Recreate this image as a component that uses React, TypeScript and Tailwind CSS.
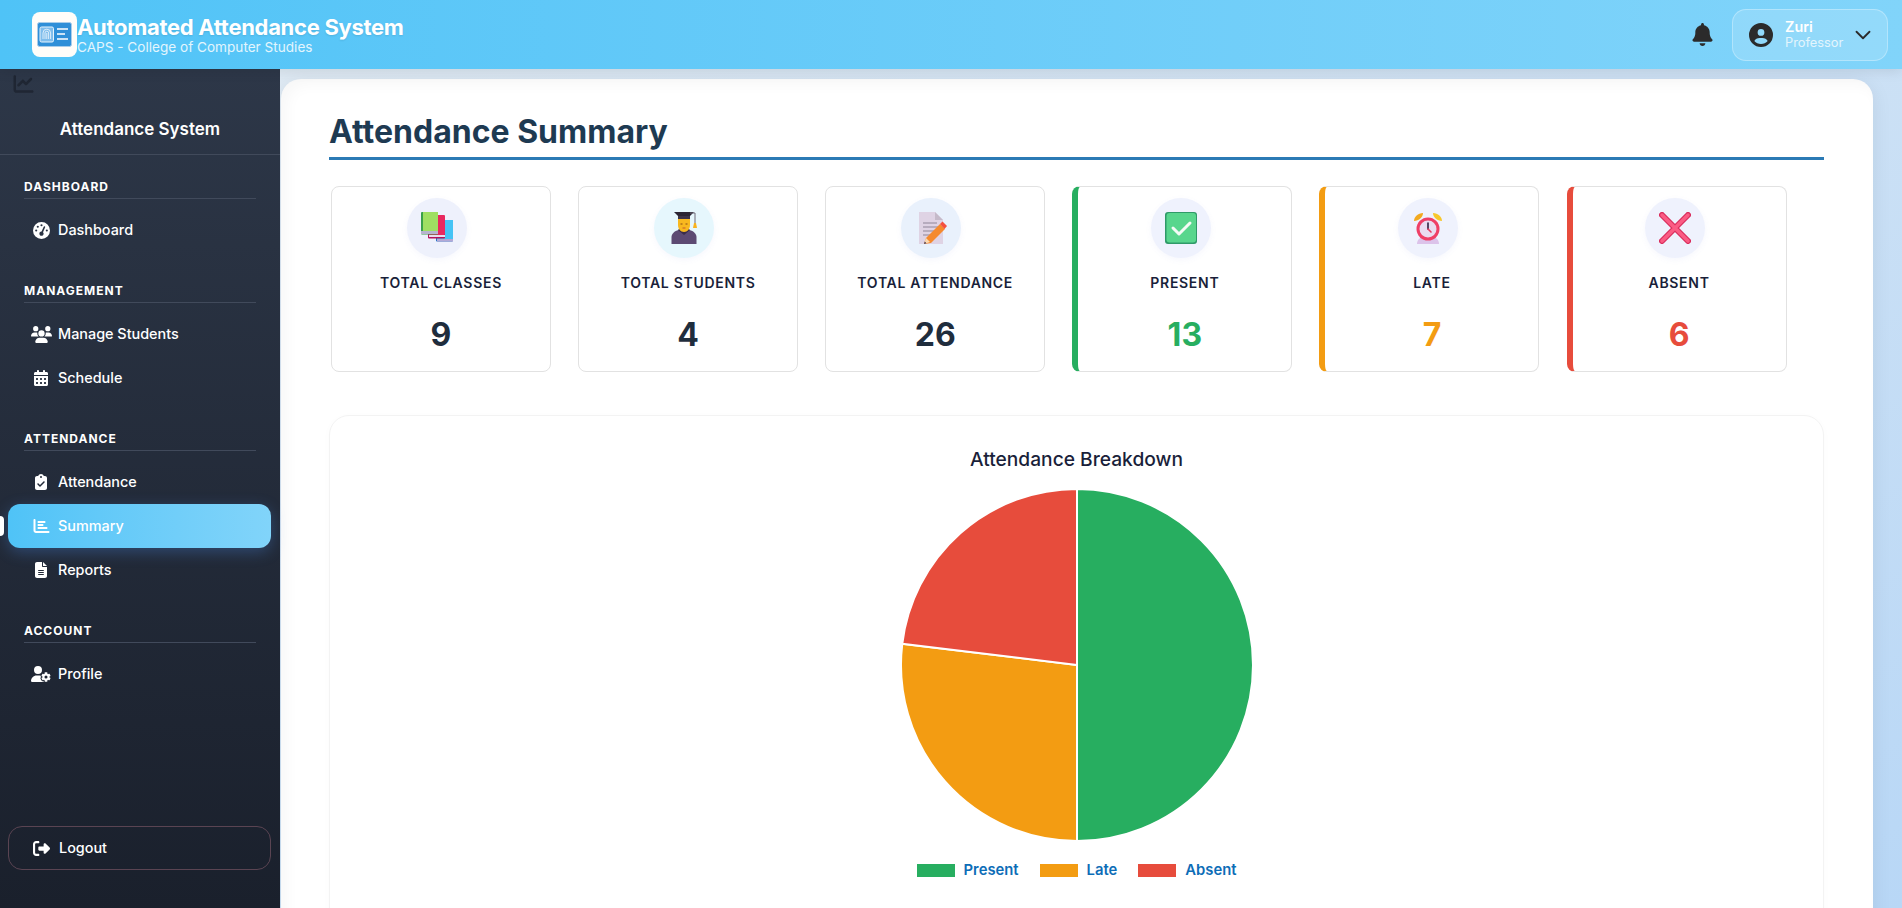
import type { ReactNode } from 'react';
import { ChevronDown } from 'lucide-react';
import {
  FaBell,
  FaCalendarDays,
  FaChartBar,
  FaChartLine,
  FaCircleUser,
  FaClipboardCheck,
  FaFileLines,
  FaGaugeHigh,
  FaRightFromBracket,
  FaUserGear,
  FaUsers,
} from 'react-icons/fa6';

const font = { fontFamily: 'Inter, "Noto Sans", sans-serif' };

// Emoji style pictures for the stat cards
const BooksIcon = () => (
  <svg viewBox="0 0 32 32" className="h-8 w-8">
    <rect x="15" y="9" width="17" height="20.5" rx="1" fill="#1f6fc4" />
    <rect x="16" y="8" width="16" height="19" fill="#45c3f5" />
    <rect x="16" y="27" width="16" height="2.5" fill="#b3a9d6" />
    <rect x="7" y="4" width="17" height="22.5" rx="1" fill="#b3125a" />
    <rect x="8" y="3" width="16" height="20" rx="1" fill="#e8295f" />
    <rect x="8" y="23" width="16" height="2" fill="#e9dcef" />
    <rect x="0" y="0" width="17" height="22.5" rx="1" fill="#3aa04a" />
    <rect x="2" y="0" width="15" height="19" fill="#9fdf62" />
    <rect x="0" y="19" width="17" height="3" fill="#b7b3cf" />
  </svg>
);

const StudentIcon = () => (
  <svg viewBox="0 0 32 32" className="h-8 w-8">
    <path d="M3.500 32v-7c0-3 3-6 7-7h11c4 1 7 4 7 7v7z" fill="#5c4a73" />
    <path d="M10 18l6 5 6-5-2-2h-8z" fill="#3a2d4a" />
    <path d="M10 6h12v7c0 4-2.500 7-6 7s-6-3-6-7z" fill="#f8b81f" />
    <path d="M12.500 12h2M17.500 12h2" stroke="#8a4b16" strokeWidth="1.2" />
    <path d="M14.500 16h3" stroke="#d0682c" strokeWidth="1.2" />
    <path d="M6 0h20l-5 5H11z" fill="#2b2533" />
    <rect x="10" y="4" width="12" height="3" fill="#3c3346" />
    <path d="M22 1h5v10" fill="none" stroke="#6f6a78" strokeWidth="1" />
    <path d="M26 11h2l1 5h-4z" fill="#f9b21e" />
  </svg>
);

const MemoIcon = () => (
  <svg viewBox="0 0 32 32" className="h-8 w-8">
    <path d="M4 0h16l8 8v24H4z" fill="#dfd3e4" />
    <path d="M20 0l8 8h-8z" fill="#c5bac9" />
    <path d="M8 11h14M8 15h16M8 19h12M8 23h7" stroke="#8f8697" strokeWidth="1.2" />
    <path d="M9 32l2-6 14-14 5 5-14 14z" fill="#f58a2e" />
    <path d="M25 12l2.500-2.500 4.500 4.500-2.500 3z" fill="#f4513f" />
    <path d="M9 32l2-6 4 4z" fill="#fbd9b1" />
    <path d="M9 32l.8-2.400 1.600 1.600z" fill="#3a2d4a" />
  </svg>
);

const CheckIcon = () => (
  <svg viewBox="0 0 32 32" className="h-8 w-8">
    <rect x="0" y="0" width="32" height="32" rx="3" fill="#2f9a68" />
    <rect x="1.500" y="1" width="29.500" height="29.500" rx="3" fill="#58d68d" />
    <path d="M8 16l6 6 11-11" fill="none" stroke="#f4faf6" strokeWidth="3" strokeLinecap="round" strokeLinejoin="round" />
  </svg>
);

const ClockIcon = () => (
  <svg viewBox="0 0 32 32" className="h-8 w-8">
    <path d="M5 32c0-4 3-7 6-7h10c3 0 6 3 6 7z" fill="#dcc3ea" />
    <path d="M2 9c0-4 4-8 9-8 0 4-4 8-9 8z" fill="#f2a91f" />
    <path d="M30 9c0-4-4-8-9-8 0 4 4 8 9 8z" fill="#f7c72c" />
    <circle cx="16" cy="17" r="11.500" fill="#ef3f66" />
    <circle cx="16" cy="17" r="8.500" fill="#eadcf0" />
    <path d="M16 11v6" stroke="#2f2140" strokeWidth="1.6" strokeLinecap="round" />
    <path d="M16 17l3 3" stroke="#e8385f" strokeWidth="1.6" strokeLinecap="round" />
  </svg>
);

const CrossIcon = () => (
  <svg viewBox="0 0 32 32" className="h-8 w-8">
    <path d="M3 3l26 26M29 3L3 29" stroke="#d92f5e" strokeWidth="6" strokeLinecap="round" />
    <path d="M3 3l26 26M29 3L3 29" stroke="#fb5c84" strokeWidth="3.500" strokeLinecap="round" />
  </svg>
);

const LogoIcon = () => (
  <svg viewBox="0 0 35 25" className="h-[25px] w-[35px]">
    <rect x="0.500" y="0.500" width="34" height="24" rx="2" fill="#2f8fd8" stroke="#a9cdea" />
    <rect x="3" y="5" width="13.500" height="15" rx="1.500" fill="#7fbdec" stroke="#e8f4fc" />
    <path d="M6 17v-6a3.800 3.800 0 017.600 0v6M8 17v-6a1.800 1.800 0 013.600 0v6M9.800 11v6" fill="none" stroke="#f2f9fe" strokeWidth="0.800" />
    <path d="M20 7h11M20 12h8M20 17h11" stroke="#fff" strokeWidth="1.300" />
  </svg>
);

interface NavItem {
  label: string;
  icon: ReactNode;
  active?: boolean;
}

const navGroups: { title: string; items: NavItem[] }[] = [
  { title: 'DASHBOARD', items: [{ label: 'Dashboard', icon: <FaGaugeHigh className="h-[17px] w-[17px] shrink-0" /> }] },
  {
    title: 'MANAGEMENT',
    items: [
      { label: 'Manage Students', icon: <FaUsers className="h-[17px] w-[21px] shrink-0" /> },
      { label: 'Schedule', icon: <FaCalendarDays className="h-[16px] w-[16px] shrink-0" /> },
    ],
  },
  {
    title: 'ATTENDANCE',
    items: [
      { label: 'Attendance', icon: <FaClipboardCheck className="h-[16px] w-[16px] shrink-0" /> },
      { label: 'Summary', icon: <FaChartBar className="h-[16px] w-[17px] shrink-0" />, active: true },
      { label: 'Reports', icon: <FaFileLines className="h-[16px] w-[16px] shrink-0" /> },
    ],
  },
  { title: 'ACCOUNT', items: [{ label: 'Profile', icon: <FaUserGear className="h-[16px] w-[20px] shrink-0" /> }] },
];

const stats = [
  { label: 'TOTAL CLASSES', value: 9, icon: <BooksIcon />, circle: 'bg-[#eef1fc]', color: 'text-[#1f2d3d]', edge: '' },
  { label: 'TOTAL STUDENTS', value: 4, icon: <StudentIcon />, circle: 'bg-[#e6f7fd]', color: 'text-[#1f2d3d]', edge: '' },
  { label: 'TOTAL ATTENDANCE', value: 26, icon: <MemoIcon />, circle: 'bg-[#e9f1fc]', color: 'text-[#1f2d3d]', edge: '' },
  { label: 'PRESENT', value: 13, icon: <CheckIcon />, circle: 'bg-[#eff2fd]', color: 'text-[#27ae60]', edge: 'border-l-[6px] border-l-[#27ae60]' },
  { label: 'LATE', value: 7, icon: <ClockIcon />, circle: 'bg-[#eff2fd]', color: 'text-[#f39c12]', edge: 'border-l-[6px] border-l-[#f39c12]' },
  { label: 'ABSENT', value: 6, icon: <CrossIcon />, circle: 'bg-[#eff2fd]', color: 'text-[#e74c3c]', edge: 'border-l-[6px] border-l-[#e74c3c]' },
];

const slices = [
  { label: 'Present', value: 13, color: '#27ae60' },
  { label: 'Late', value: 7, color: '#f39c12' },
  { label: 'Absent', value: 6, color: '#e74c3c' },
];

// Pie drawn clockwise from 12 o'clock, same as the chart it stands for
const PieChart = () => {
  const total = slices.reduce((sum, s) => sum + s.value, 0);
  const r = 176;
  let start = 0;
  return (
    <svg viewBox="-178 -178 356 356" className="h-[356px] w-[356px]">
      {slices.map(s => {
        const end = start + (s.value / total) * Math.PI * 2;
        const x1 = Math.sin(start) * r;
        const y1 = -Math.cos(start) * r;
        const x2 = Math.sin(end) * r;
        const y2 = -Math.cos(end) * r;
        const large = end - start > Math.PI ? 1 : 0;
        start = end;
        return (
          <path
            key={s.label}
            d={`M0 0L${x1} ${y1}A${r} ${r} 0 ${large} 1 ${x2} ${y2}Z`}
            fill={s.color}
            stroke="#fff"
            strokeWidth="2"
          />
        );
      })}
    </svg>
  );
};

const Sidebar = () => (
  <aside className="flex w-[280px] shrink-0 flex-col bg-gradient-to-b from-[#2d3748] to-[#1a202c]">
    <div className="relative h-[86px] shrink-0 border-b border-[#414a5b]">
      <FaChartLine className="absolute left-[12px] top-[5px] h-[20px] w-[23px] text-[#1f2633]" />
      <p className="pt-[49px] text-center text-[17px] font-semibold leading-[22px] text-white">Attendance System</p>
    </div>
    <nav className="flex-1">
      {navGroups.map(group => (
        <div key={group.title} className="mt-[31px] first:mt-[24px]">
          <div className="mx-[24px] border-b border-[#414a5b] pb-[3px] text-[12px] font-bold leading-[16px] tracking-[1px] text-white">
            {group.title}
          </div>
          <div className="mt-[9px] flex flex-col">
            {group.items.map(item => (
              <div key={item.label} className="relative h-[44px]">
                {item.active && <span className="absolute left-0 top-[12px] h-[20px] w-[4px] rounded-r-sm bg-white" />}
                <div
                  className={`ml-[8px] mr-[9px] flex h-[44px] items-center rounded-[12px] pl-[24px] text-[14.4px] font-medium text-white ${
                    item.active ? 'bg-gradient-to-r from-[#4fc3f7] to-[#81d4fa] shadow-[0_4px_15px_rgba(79,150,247,0.3)]' : ''
                  }`}
                >
                  <span className="mr-[8px] flex w-[18px] justify-center">{item.icon}</span>
                  {item.label}
                </div>
              </div>
            ))}
          </div>
        </div>
      ))}
    </nav>
    <div className="mb-[38px] ml-[8px] mr-[9px] flex h-[44px] items-center rounded-[14px] border border-[#5a4452] pl-[24px] text-[14.4px] font-medium text-white">
      <FaRightFromBracket className="mr-[9px] h-[17px] w-[17px]" />
      Logout
    </div>
  </aside>
);

const Header = () => (
  <header className="relative z-10 flex h-[69px] shrink-0 items-center justify-between bg-gradient-to-r from-[#4fc3f7] to-[#81d4fa] pl-[32px] pr-[14px] shadow-[0_2px_12px_rgba(0,0,0,0.1)]">
    <div className="flex items-center">
      <div className="flex h-[45px] w-[45px] items-center justify-center rounded-[8px] bg-[#fffdf9]">
        <LogoIcon />
      </div>
      <div>
        <h1 className="text-[22px] font-bold leading-[25px] tracking-[-0.3px] text-white [text-shadow:0_1px_2px_rgba(0,0,0,0.1)]">
          Automated Attendance System
        </h1>
        <p className="text-[13.6px] leading-[14px] text-[#e3f5fd]">CAPS - College of Computer Studies</p>
      </div>
    </div>
    <div className="flex items-center">
      <FaBell className="mr-[19px] h-[23px] w-[21px] text-[#2b2b2b]" />
      <div className="flex h-[52px] w-[156px] items-center rounded-[14px] border border-white/30 bg-white/15 pl-[16px]">
        <FaCircleUser className="h-[24px] w-[24px] text-[#2b2b2b]" />
        <div className="ml-[12px] w-[65px]">
          <p className="text-[14.4px] font-semibold leading-[16px] text-white">Zuri</p>
          <p className="text-[12.8px] leading-[16px] text-[#e3f5fd]">Professor</p>
        </div>
        <ChevronDown size={26} strokeWidth={1.7} className="text-[#2b2b2b]" />
      </div>
    </div>
  </header>
);

const StatCard = ({ stat }: { stat: (typeof stats)[number] }) => (
  <div className={`flex h-[186px] w-[220px] flex-col items-center rounded-[8px] border border-[#e2e2e2] bg-white pt-[11px] ${stat.edge}`}>
    <div className={`mr-[8px] flex h-[60px] w-[60px] items-center justify-center rounded-full shadow-[0_2px_6px_rgba(100,120,220,0.06)] ${stat.circle}`}>
      {stat.icon}
    </div>
    <p className="mt-[15px] text-[14px] font-semibold leading-[20px] tracking-[0.7px] text-[#1a1f3a]">{stat.label}</p>
    <p className={`mt-[22px] text-[32px] font-bold leading-[40px] ${stat.color}`}>{stat.value}</p>
  </div>
);

export default function App() {
  return (
    <div style={font} className="flex h-screen flex-col overflow-hidden">
      <Header />
      <div className="flex min-h-0 flex-1">
        <Sidebar />
        <main className="flex-1 overflow-hidden bg-gradient-to-br from-[#dfeaf4] to-[#b8d7f6] pl-[1px] pr-[29px] pt-[10px]">
          <div className="h-[1200px] rounded-[20px] bg-white pl-[48px] pr-[49px] pt-[33px] shadow-[inset_6px_6px_14px_rgba(0,0,0,0.03),0_4px_20px_rgba(0,0,0,0.08)]">
            <h2 className="border-b-[3px] border-[#2b7ab5] pb-[5px] text-[32px] font-bold leading-[40px] text-[#1e3a52]">
              Attendance Summary
            </h2>
            <div className="ml-[2px] mt-[26px] flex gap-[27.12px]">
              {stats.map(stat => (
                <StatCard key={stat.label} stat={stat} />
              ))}
            </div>
            <section className="mt-[43px] flex flex-col items-center rounded-[20px] border border-[#f3f3f3] pb-[60px] pt-[31px] shadow-[0_2px_10px_rgba(0,0,0,0.02)]">
              <h3 className="text-[19.2px] font-medium leading-[24px] text-[#1a1f3a]">Attendance Breakdown</h3>
              <div className="mt-[16px]">
                <PieChart />
              </div>
              <div className="mt-[19px] flex items-center gap-[21px]">
                {slices.map(s => (
                  <div key={s.label} className="flex items-center gap-[9px]">
                    <span className="h-[13px] w-[38px]" style={{ backgroundColor: s.color }} />
                    <span className="text-[14.8px] font-semibold leading-[16px] text-[#0d6db7]">{s.label}</span>
                  </div>
                ))}
              </div>
            </section>
          </div>
        </main>
      </div>
    </div>
  );
}
